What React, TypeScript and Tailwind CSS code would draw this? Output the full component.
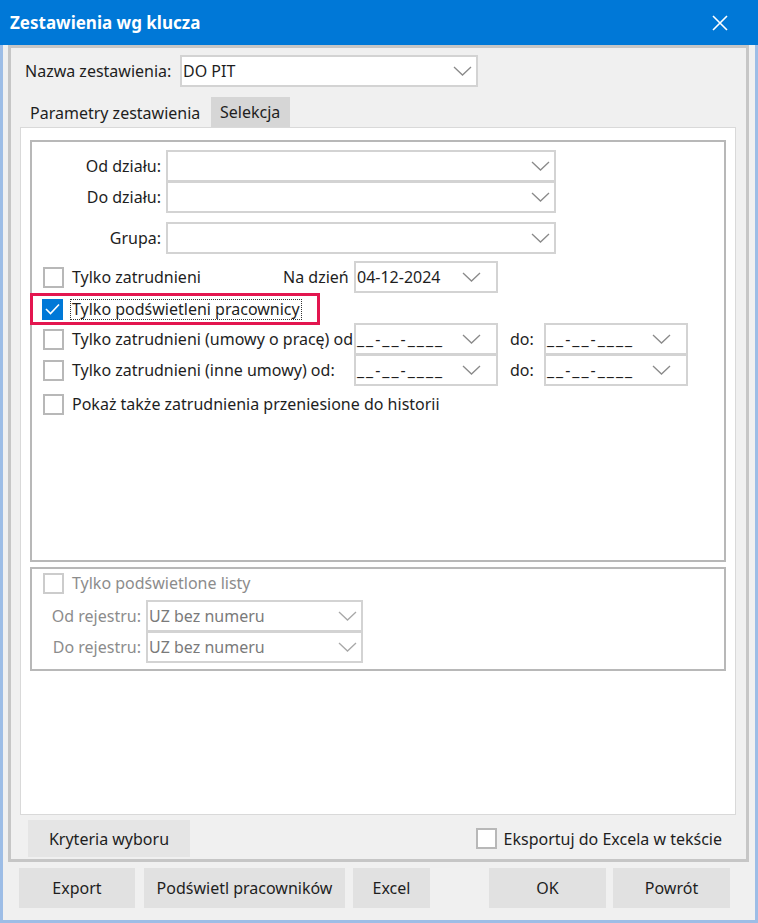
import React from "react";

function Chevron({ light }: { light?: boolean }) {
  return (
    <svg width="19" height="10" viewBox="0 0 19 10" className="shrink-0">
      <path
        d="M1 1 L9.5 9 L18 1"
        fill="none"
        stroke={light ? "#a8a8a8" : "#8a8a8a"}
        strokeWidth="1.3"
      />
    </svg>
  );
}

function Combo({
  width,
  value,
  muted,
  date,
}: {
  width: string;
  value?: string;
  muted?: boolean;
  date?: boolean;
}) {
  return (
    <div
      className={`${width} h-[32px] shrink-0 flex items-center justify-between border-2 border-[#d3d3d3] bg-white pl-px ${
        date ? "pr-[15px]" : "pr-[4px]"
      }`}
    >
      <span
        className={`whitespace-nowrap ${muted ? "text-[#7a7a7a]" : "text-[#1e1e1e]"} ${
          value?.startsWith("_") ? "tracking-[2px]" : ""
        }`}
      >
        {value}
      </span>
      <Chevron light={muted} />
    </div>
  );
}

function Check({ checked, disabled }: { checked?: boolean; disabled?: boolean }) {
  if (checked) {
    return (
      <span className="w-[21px] h-[21px] shrink-0 bg-[#0078d7] flex items-center justify-center">
        <svg width="15" height="12" viewBox="0 0 15 12">
          <path d="M1 6 L5.5 10.5 L14 1.5" fill="none" stroke="white" strokeWidth="1.6" />
        </svg>
      </span>
    );
  }
  return (
    <span
      className={`w-[21px] h-[21px] shrink-0 border-2 bg-white ${
        disabled ? "border-[#cccccc]" : "border-[#b8b8b8]"
      }`}
    />
  );
}

export default function App() {
  return (
    <div className="w-[758px] h-[923px] flex flex-col bg-[#f0f0f0] font-['Noto_Sans',sans-serif] text-[16px] text-[#1e1e1e] overflow-hidden">
      {/* title bar */}
      <div className="h-[45px] shrink-0 bg-[#0078d7] flex items-center justify-between pl-[10px] pr-[30px]">
        <span className="text-white font-bold text-[17px]">Zestawienia wg klucza</span>
        <svg width="16" height="16" viewBox="0 0 16 16">
          <path d="M1 1 L15 15 M15 1 L1 15" stroke="white" strokeWidth="1.6" />
        </svg>
      </div>

      <div className="flex-1 flex flex-col border-x-[3px] border-b-[3px] border-[#9dbde6] px-[5px]">
        {/* outer frame */}
        <div className="w-[741px] h-[817px] shrink-0 border-[3px] border-[#c6c6c6] flex flex-col">
          <div className="flex items-center pl-[14px] pt-[7px]">
            <span className="w-[155px] shrink-0 whitespace-nowrap">Nazwa zestawienia:</span>
            <Combo width="w-[298px]" value="DO PIT" />
          </div>

          {/* tabs */}
          <div className="flex items-end ml-[9px] mt-[10px] h-[30px]">
            <div className="w-[191px] h-[28px] pl-[10px] flex items-center whitespace-nowrap">Parametry zestawienia</div>
            <div className="w-[79px] h-[30px] pl-[9px] flex items-center bg-[#d6d6d6]">Selekcja</div>
          </div>

          <div className="ml-[9px] w-[716px] h-[688px] shrink-0 border border-[#d9d9d9] bg-white flex flex-col pl-[9px] pt-[12px]">
            {/* selection group */}
            <div className="w-[696px] h-[422px] shrink-0 border-2 border-[#b8b8b8] flex flex-col pt-[8px]">
              <div className="flex items-center h-[32px]">
                <span className="w-[129px] text-right shrink-0">Od działu:</span>
                <div className="ml-[5px]">
                  <Combo width="w-[390px]" />
                </div>
              </div>
              <div className="flex items-center h-[32px] mt-[-1px]">
                <span className="w-[129px] text-right shrink-0">Do działu:</span>
                <div className="ml-[5px]">
                  <Combo width="w-[390px]" />
                </div>
              </div>
              <div className="flex items-center h-[32px] mt-[9px]">
                <span className="w-[129px] text-right shrink-0">Grupa:</span>
                <div className="ml-[5px]">
                  <Combo width="w-[390px]" />
                </div>
              </div>

              <div className="flex items-center h-[32px] mt-[7px]">
                <div className="w-[251px] shrink-0 flex items-center gap-[8px] pl-[11px]">
                  <Check />
                  <span>Tylko zatrudnieni</span>
                </div>
                <span className="w-[71px] shrink-0 whitespace-nowrap">Na dzień</span>
                <Combo width="w-[144px]" value="04-12-2024" date />
              </div>

              <div className="relative z-10 ml-[-2px] w-[290px] h-[32px] border-[3px] border-[#e3164f] flex items-center gap-[7px] pl-[9px]">
                <Check checked />
                <span className="border border-dotted border-[#333] px-px leading-[19px] whitespace-nowrap">
                  Tylko podświetleni pracownicy
                </span>
              </div>

              <div className="flex items-center h-[32px] mt-[-2px]">
                <div className="w-[322px] shrink-0 flex items-center gap-[8px] pl-[11px] whitespace-nowrap">
                  <Check />
                  <span>Tylko zatrudnieni (umowy o pracę) od</span>
                </div>
                <Combo width="w-[144px]" value="__-__-____" date />
                <span className="ml-[12px] w-[34px] shrink-0">do:</span>
                <Combo width="w-[144px]" value="__-__-____" date />
              </div>
              <div className="flex items-center h-[32px] mt-[-1px]">
                <div className="w-[322px] shrink-0 flex items-center gap-[8px] pl-[11px] whitespace-nowrap">
                  <Check />
                  <span>Tylko zatrudnieni (inne umowy) od:</span>
                </div>
                <Combo width="w-[144px]" value="__-__-____" date />
                <span className="ml-[12px] w-[34px] shrink-0">do:</span>
                <Combo width="w-[144px]" value="__-__-____" date />
              </div>

              <div className="flex items-center h-[24px] mt-[6px] gap-[8px] pl-[11px]">
                <Check />
                <span>Pokaż także zatrudnienia przeniesione do historii</span>
              </div>
            </div>

            {/* register group (disabled) */}
            <div className="w-[696px] shrink-0 mt-[5px] border-2 border-[#b8b8b8] flex flex-col pt-[2px] pb-[6px] text-[#8c8c8c]">
              <div className="flex items-center h-[24px] gap-[8px] pl-[11px]">
                <Check disabled />
                <span>Tylko podświetlone listy</span>
              </div>
              <div className="flex items-center h-[32px] mt-[5px]">
                <span className="w-[109px] text-right shrink-0 whitespace-nowrap">Od rejestru:</span>
                <div className="ml-[5px]">
                  <Combo width="w-[217px]" value="UZ bez numeru" muted />
                </div>
              </div>
              <div className="flex items-center h-[32px] mt-[-1px]">
                <span className="w-[109px] text-right shrink-0 whitespace-nowrap">Do rejestru:</span>
                <div className="ml-[5px]">
                  <Combo width="w-[217px]" value="UZ bez numeru" muted />
                </div>
              </div>
            </div>
          </div>

          <div className="flex items-center mt-[5px] h-[37px]">
            <button className="ml-[17px] w-[162px] h-[37px] bg-[#e5e5e5]">Kryteria wyboru</button>
            <div className="ml-auto mr-[24px] flex items-center gap-[7px]">
              <Check />
              <span>Eksportuj do Excela w tekście</span>
            </div>
          </div>
        </div>

        {/* dialog buttons */}
        <div className="flex items-center mt-[6px] pl-[11px]">
          <button className="w-[116px] h-[40px] bg-[#e1e1e1]">Export</button>
          <button className="ml-[9px] w-[201px] h-[40px] bg-[#e1e1e1]">Podświetl pracowników</button>
          <button className="ml-[8px] w-[77px] h-[40px] bg-[#e1e1e1]">Excel</button>
          <button className="ml-[59px] w-[117px] h-[40px] bg-[#e1e1e1]">OK</button>
          <button className="ml-[7px] w-[117px] h-[40px] bg-[#e1e1e1]">Powrót</button>
        </div>
      </div>
    </div>
  );
}
